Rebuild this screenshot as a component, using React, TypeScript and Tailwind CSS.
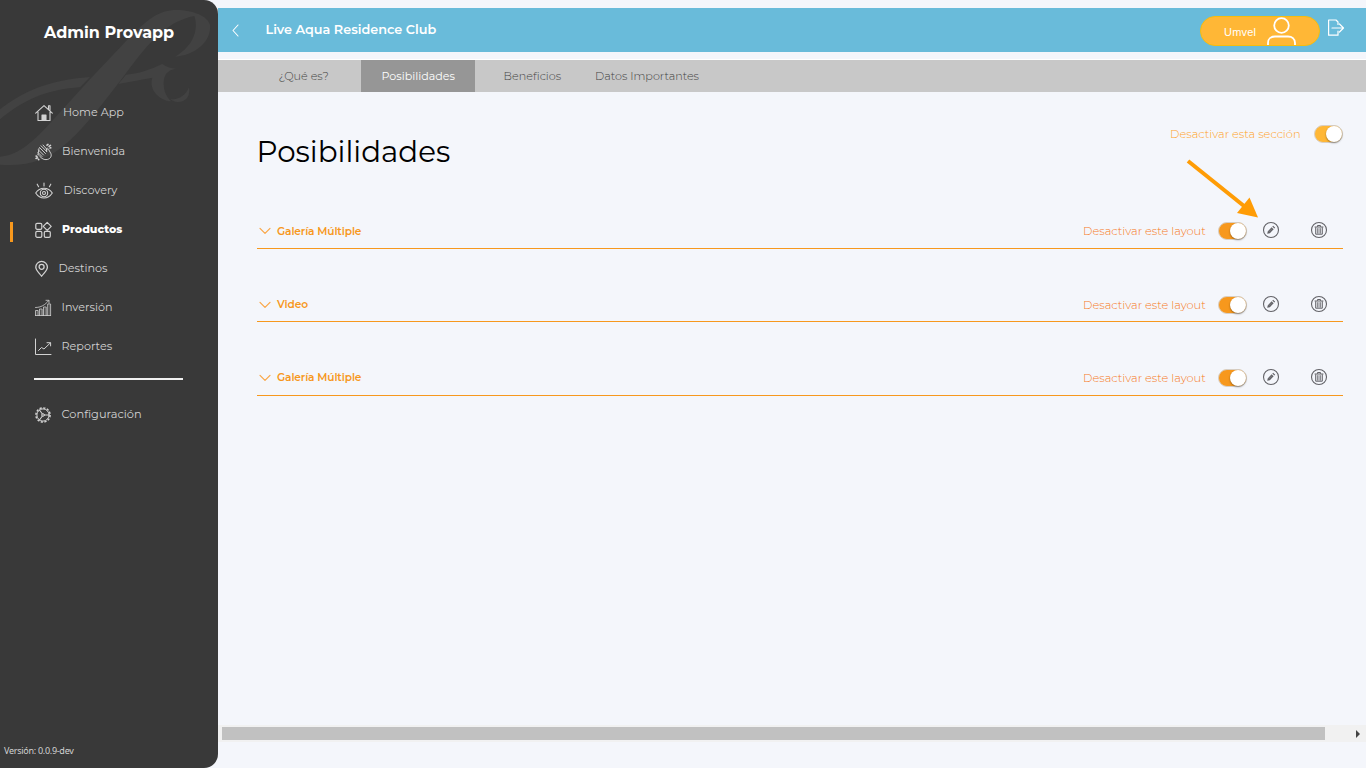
import React from "react";

const stroke = { fill: "none", stroke: "currentColor", strokeLinecap: "round", strokeLinejoin: "round" } as const;

const HomeIcon = () => (
  <svg width="18" height="18" viewBox="0 0 18 18" {...stroke} strokeWidth="1.1">
    <path d="M.7 9.2 9 1.600l8.300 7.600M3 8v8.500h12V8M13.500 5V1.800h1.500v4.800" />
    <path d="M7 16.500V11h4v5.500z" fill="currentColor" />
  </svg>
);

const ClapIcon = () => (
  <svg width="18" height="18" viewBox="0 0 18 18" {...stroke} strokeWidth=".95">
    <path d="M3 11.500 4 5.500M4.500 4.500l6 6M6 2.800l6 6M8 2l4.500 5M3.500 7l5 5M3 9.500l4 4M11.500 8.500V5.600c1-.8 2 0 2.200 1l2.300 4.200c1 3-1.400 5.800-5 5.800-3 0-5-1.600-7.800-5.100" />
    <path d="M12 2.200l1-.8M14 3.400l1.500-1M15 5l.8-.2M1 13l1 .5M1 15.500l1.500-.7M3.400 16.200l.4.500" strokeWidth="1.500" />
  </svg>
);

const EyeIcon = () => (
  <svg width="18" height="18" viewBox="0 0 18 18" {...stroke} strokeWidth="1.1">
    <path d="M.7 11C3 7.500 6 6.200 9 6.200s6 1.300 8.300 4.800c-2.300 3.500-5.300 5-8.300 5S3 14.500.7 11zM9 1v3M2.200 2.200l1.400 2.500M15.800 2.200l-1.400 2.500" />
    <circle cx="9" cy="11" r="3.700" /><circle cx="9" cy="11" r="1.500" />
  </svg>
);

const ProductsIcon = () => (
  <svg width="18" height="18" viewBox="0 0 18 18" {...stroke} strokeWidth="1.200">
    <rect x=".8" y="2.300" width="6" height="6" rx="1.300" />
    <rect x=".8" y="10.300" width="6" height="6" rx="1.300" />
    <rect x="9.300" y="10.300" width="6" height="6" rx="1.300" />
    <path d="M12.200 1.300 16.200 5.300l-4 4-4-4z" />
  </svg>
);

const PinIcon = () => (
  <svg width="14" height="18" viewBox="0 0 14 18" {...stroke} strokeWidth="1.300">
    <path d="M6.600 16.200C3.800 12.500.8 10.300.8 7.200a5.800 5.800 0 0 1 11.600 0c0 3.100-3 5.300-5.800 9z" />
    <circle cx="6.600" cy="6.800" r="2.500" />
  </svg>
);

const InvestIcon = () => (
  <svg width="18" height="18" viewBox="0 0 18 18" {...stroke} strokeWidth=".8">
    <path d="M.5 16.500v-5h2.600v5M4.500 16.500v-6.500h2.600v6.500M8.500 16.500V8h2.700v8.500M12.700 16.500V5h2.900v11.500M.5 16.500h15.100" />
    <path d="M2 12.500v3.500M6 11v5M10 9.200v6.800M14.300 6.200V16" opacity=".4" />
    <path d="M.5 8.500C6 8.500 10 6 13.700 1.600M11 1.300h3v2.900" />
  </svg>
);

const ReportIcon = () => (
  <svg width="18" height="18" viewBox="0 0 18 18" {...stroke} strokeWidth="1">
    <path d="M.5 1v15.500h15.500M3.500 12.500 6.500 9.500l2.500 1.500 6.300-6M12 4.700h3.600v3.200" />
  </svg>
);

const GearIcon = () => (
  <svg width="18" height="18" viewBox="0 0 18 18" {...stroke}>
    <circle cx="8" cy="9" r="7.100" strokeWidth="1.500" strokeDasharray="2.200 1.520" strokeLinecap="butt" />
    <circle cx="8" cy="9" r="6.100" strokeWidth="1" />
    <circle cx="8" cy="9" r="1.300" strokeWidth="1" />
    <path d="M9.500 9H14M7.200 7.800 4.500 4M7.200 10.200 4.500 14" strokeWidth="1.100" />
  </svg>
);

type NavItem = { label: string; icon: React.ReactNode; gap: string; active?: boolean };

const nav: NavItem[] = [
  { label: "Home App", icon: <HomeIcon />, gap: "ml-[10px]" },
  { label: "Bienvenida", icon: <ClapIcon />, gap: "ml-[9px]" },
  { label: "Discovery", icon: <EyeIcon />, gap: "ml-[10.500px]" },
  { label: "Productos", icon: <ProductsIcon />, gap: "ml-[9px]", active: true },
  { label: "Destinos", icon: <PinIcon />, gap: "ml-[9.500px]" },
  { label: "Inversión", icon: <InvestIcon />, gap: "ml-[8.500px]" },
  { label: "Reportes", icon: <ReportIcon />, gap: "ml-[8.500px]" },
];

function Swash() {
  return (
    <svg className="absolute left-0 top-0" width="218" height="200" viewBox="0 0 654 600" fill="#424242">
      <path d="M525 170C585 166 635 125 630 75C625 50 580 30 530 30C475 30 440 58 370 132L270 238L150 370C90 436 50 466 0 470V494C85 500 145 480 205 425C270 365 315 300 370 230C430 150 490 65 583 48C595 85 585 135 525 170z" />
      <path d="M0 328C65 278 140 240 270 231L240 262C150 268 80 292 0 358z" />
      <path d="M378 224C420 221 454 207 487 192C500 202 514 205 528 206C500 211 492 225 491 250C491 275 500 292 514 304C478 302 445 268 457 233L355 252z" />
      <path d="M512 297C535 300 556 288 567 262C572 290 556 307 532 306C524 306 517 302 512 297z" />
    </svg>
  );
}

function Sidebar() {
  return (
    <aside className="relative flex h-[768px] w-[218px] shrink-0 flex-col rounded-r-[14px] bg-[#393939] text-[#d2d2d2]">
      <Swash />
      <h1 className="relative mt-[21px] h-6 whitespace-nowrap pl-[44px] text-[16px] font-bold leading-6 text-white">Admin Provapp</h1>
      <nav className="relative mt-[48px] flex flex-col">
        {nav.map((n) => (
          <a key={n.label} className="flex h-[39px] items-center">
            <span className={n.active ? "ml-[10px] mt-[4px] h-5 w-[3px] bg-[#f7981d]" : "ml-[10px] h-5 w-[3px]"} />
            <span className="ml-[22px]">{n.icon}</span>
            <span className={`${n.gap} whitespace-nowrap ${n.active ? "text-[11px] font-extrabold text-white" : "text-[11.200px]"}`}>{n.label}</span>
          </a>
        ))}
      </nav>
      <hr className="relative ml-[34px] mt-[12px] w-[149px] border-0 border-t-2 border-[#f0f0f0]" />
      <a className="mt-[15px] flex h-[39px] items-center pl-[35px]">
        <span><GearIcon /></span>
        <span className="ml-[8.500px] whitespace-nowrap text-[11.400px]">Configuración</span>
      </a>
      <p className="mb-[10px] mt-auto pl-1 font-['Noto_Sans'] text-[9px] leading-[14px] tracking-[-0.28px]">Versión: 0.0.9-dev</p>
    </aside>
  );
}

function Toggle({ color }: { color: string }) {
  return (
    <span className={`flex h-[18px] w-[29px] items-center justify-end rounded-full border border-[#d8cfc4] ${color}`}>
      <span className="size-4 rounded-full bg-white shadow-[0_1px_2px_rgba(0,0,0,0.4)]" />
    </span>
  );
}

const EditIcon = () => (
  <svg width="18" height="18" viewBox="0 0 18 18" fill="none" stroke="#626267">
    <circle cx="9" cy="9" r="7.500" strokeWidth="1.100" />
    <path d="M5.200 12.800l.6-2.600 3.900-4 2 2-3.900 4zM10.300 5.600l.9-.9 2 2-.9.900z" fill="#626267" stroke="none" />
    <path d="M6.800 10.900 10.300 7.400" stroke="#aaa" strokeWidth=".4" />
  </svg>
);

const TrashIcon = () => (
  <svg width="18" height="18" viewBox="0 0 18 18" fill="none" stroke="#626267">
    <circle cx="9" cy="9" r="7.500" strokeWidth="1.100" />
    <path d="M5.700 6.300v6.900h6.600V6.300M4.600 6h8.800M7.500 5.800V4.500h3v1.300" strokeWidth="1" />
    <path d="M7.400 7.200V12.600M9 7.200V12.600M10.600 7.200V12.600" strokeWidth=".8" />
  </svg>
);

function LayoutRow({ title }: { title: string }) {
  return (
    <section className="flex h-[36px] items-start border-b border-[#f7981d] text-[#f7981d]">
      <svg className="ml-[2px] mt-[14.150px]" width="12" height="8" viewBox="0 0 12 8" {...stroke} stroke="#faa645" strokeWidth="1.200"><path d="M1 1.300l5 5 5-5" /></svg>
      <h3 className="ml-[6px] mt-[9.500px] whitespace-nowrap text-[10.600px] font-semibold leading-[18px] tracking-[-0.1px]">{title}</h3>
      <div className="ml-auto flex">
        <span className="mt-[9.150px] w-[135px] whitespace-nowrap text-[11.400px] font-light leading-[18px] text-[#f77a1d]">Desactivar este layout</span>
        <span className="mt-[9.150px]"><Toggle color="bg-[#f7981d]" /></span>
        <span className="ml-[15px] mt-[8.150px]"><EditIcon /></span>
        <span className="ml-[30px] mr-[15px] mt-[8.150px]"><TrashIcon /></span>
      </div>
    </section>
  );
}

export default function App() {
  return (
    <div className="relative flex h-[768px] w-[1366px] overflow-hidden bg-[#f4f6fb] font-['Montserrat','Inter','Open_Sans',sans-serif]">
      <Sidebar />
      <main className="flex min-w-0 flex-1 flex-col">
        <header className="mt-2 flex h-[44px] shrink-0 items-center bg-[#69bbda] text-white">
          <svg className="ml-[13px]" width="9" height="13" viewBox="0 0 9 13" {...stroke} strokeWidth="1.100"><path d="M7 1 2 6.500 7 12" /></svg>
          <h2 className="ml-[25.500px] whitespace-nowrap text-[12.800px] font-semibold">Live Aqua Residence Club</h2>
          <button className="ml-auto mr-[7px] mt-[1px] flex h-[30px] w-[120px] items-center rounded-full border border-[#f5bd0e] bg-[#ffb736]">
            <span className="ml-[23px] mt-[3px] w-[43px] text-left font-['Liberation_Sans'] text-[11px] tracking-[0.2px]">Umvel</span>
            <svg width="30" height="28" viewBox="0 0 30 28" fill="none" stroke="white" strokeWidth="1.800"><circle cx="14.500" cy="8.500" r="7.300" /><path d="M1 28v-2c0-4 3-6.500 7-6.500h13c4 0 7 2.500 7 6.500v2" /></svg>
          </button>
          <svg className="mb-[4px] mr-[21px]" width="18" height="18" viewBox="0 0 18 18" {...stroke} strokeWidth="1.200"><path d="M11 5.500V3L9 1H1.600v15.200H11v-4M5 9h11M12.500 5 16.500 9l-4 4" /></svg>
        </header>
        <nav className="mt-[7px] flex h-[33px] shrink-0 border-t border-white bg-[#c8c8c8] text-[11.200px] font-light leading-8 text-[#444]">
          <a className="w-[143px] whitespace-nowrap pl-[60.500px]">¿Qué es?</a>
          <a className="w-[114px] whitespace-nowrap bg-[#969696] pl-[20.500px] text-[11.100px] font-normal text-white">Posibilidades</a>
          <a className="w-[120px] whitespace-nowrap pl-[28.500px] tracking-[0.05px]">Beneficios</a>
          <a className="whitespace-nowrap">Datos Importantes</a>
        </nav>
        <div className="flex flex-col pl-[39px] pr-[23px]">
          <div className="flex h-[121px] items-start justify-between">
            <h2 className="-ml-[0.500px] mt-[37px] whitespace-nowrap text-[29.300px] leading-[46px] text-black">Posibilidades</h2>
            <div className="mt-[33px] flex items-center">
              <span className="w-[144px] whitespace-nowrap text-[11.400px] font-light leading-[18px] text-[#ffa21f]">Desactivar esta sección</span>
              <Toggle color="bg-[#ffb736]" />
            </div>
          </div>
          <div className="flex flex-col gap-[37.400px]">
            <LayoutRow title="Galería Múltiple" />
            <LayoutRow title="Video" />
            <LayoutRow title="Galería Múltiple" />
          </div>
        </div>
        <div className="mb-[26px] mt-auto flex h-[17px] items-center bg-[#f1f1f1] pl-1">
          <span className="h-[13px] w-[1103px] bg-[#c1c1c1]" />
          <svg className="ml-[31px]" width="4" height="8" viewBox="0 0 4 8"><path d="M0 0l4 4-4 4z" fill="#444" /></svg>
        </div>
      </main>
      <svg className="pointer-events-none absolute left-[1180px] top-[152px]" width="86" height="70" viewBox="0 0 86 70">
        <path d="M8 9 64 54" stroke="#ff9c05" strokeWidth="4" />
        <path d="M78 65.500 57 61l12.500-15.500z" fill="#ff9c05" />
      </svg>
    </div>
  );
}
